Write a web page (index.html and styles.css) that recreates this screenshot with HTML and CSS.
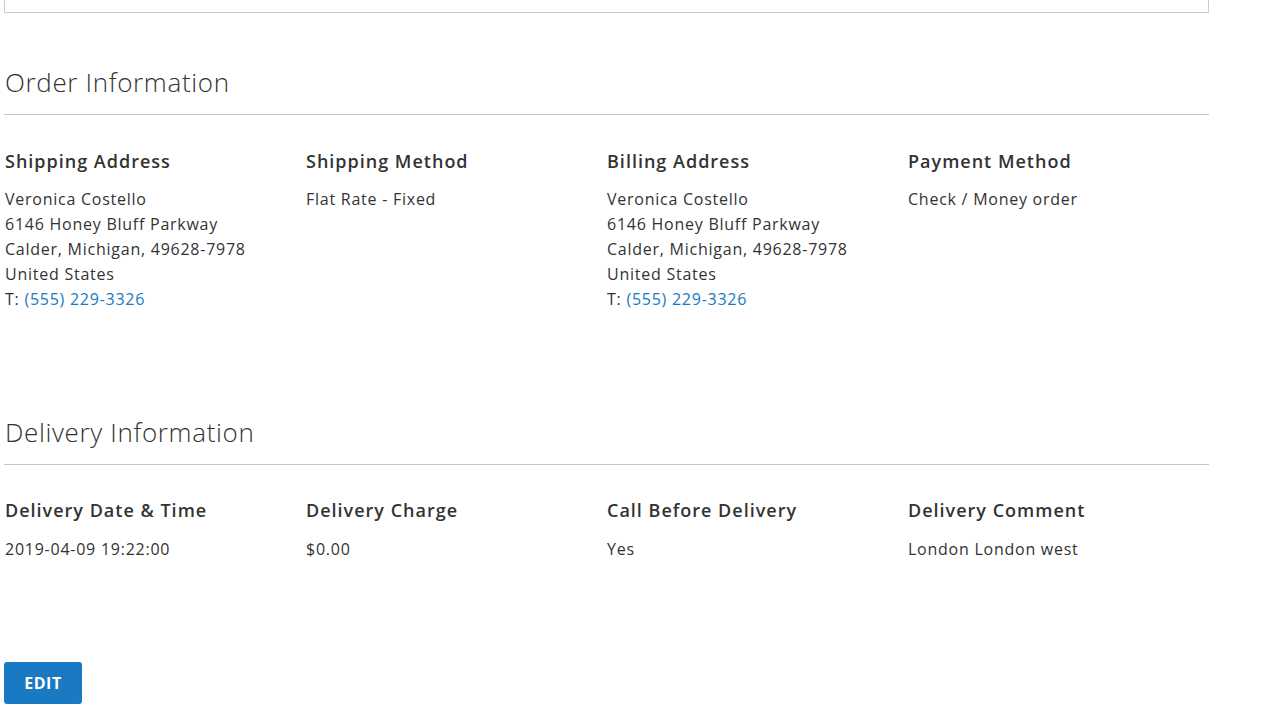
FILE: index.html
```html
<!DOCTYPE html>
<html lang="en">
<head>
    <meta charset="UTF-8">
    <meta name="viewport" content="width=device-width, initial-scale=1.0">
    <title>Order View</title>
    <link rel="stylesheet" href="styles.css">
</head>
<body>
    <main class="page">
        <div class="top-box"></div>

        <section class="block block-order">
            <h2 class="block-title">Order Information</h2>
            <div class="block-content">
                <div class="box">
                    <h3 class="box-title">Shipping Address</h3>
                    <address class="box-content">
                        Veronica Costello<br>
                        6146 Honey Bluff Parkway<br>
                        Calder, Michigan, 49628-7978<br>
                        United States<br>
                        T: <a href="#">(555) 229-3326</a>
                    </address>
                </div>
                <div class="box">
                    <h3 class="box-title">Shipping Method</h3>
                    <div class="box-content">Flat Rate - Fixed</div>
                </div>
                <div class="box">
                    <h3 class="box-title">Billing Address</h3>
                    <address class="box-content">
                        Veronica Costello<br>
                        6146 Honey Bluff Parkway<br>
                        Calder, Michigan, 49628-7978<br>
                        United States<br>
                        T: <a href="#">(555) 229-3326</a>
                    </address>
                </div>
                <div class="box">
                    <h3 class="box-title">Payment Method</h3>
                    <div class="box-content">Check / Money order</div>
                </div>
            </div>
        </section>

        <section class="block block-delivery">
            <h2 class="block-title">Delivery Information</h2>
            <div class="block-content">
                <div class="box">
                    <h3 class="box-title">Delivery Date &amp; Time</h3>
                    <div class="box-content">2019-04-09 19:22:00</div>
                </div>
                <div class="box">
                    <h3 class="box-title">Delivery Charge</h3>
                    <div class="box-content">$0.00</div>
                </div>
                <div class="box">
                    <h3 class="box-title">Call Before Delivery</h3>
                    <div class="box-content">Yes</div>
                </div>
                <div class="box">
                    <h3 class="box-title">Delivery Comment</h3>
                    <div class="box-content">London London west</div>
                </div>
            </div>
        </section>

        <button class="btn-edit" type="button">EDIT</button>
    </main>
</body>
</html>
```

FILE: styles.css
```css
body {
    font-family: 'Open Sans', 'Liberation Sans', sans-serif;
    margin: 0;
    padding: 0;
    background-color: #fff;
    color: #333;
}

.page {
    margin-left: 4px;
    width: 1205px;
}

.top-box {
    height: 12px;
    border: 1px solid #ccc;
    border-top: none;
}

.block-title {
    margin: 52px 0 0;
    padding: 0 0 14px 1px;
    border-bottom: 1px solid #c6c6c6;
    font-size: 26px;
    font-weight: 300;
    line-height: 35px;
    letter-spacing: 0.65px;
}

.block-order {
    padding-bottom: 51px;
}

.block-content {
    display: grid;
    grid-template-columns: repeat(4, 1fr);
    margin-top: 34px;
    padding-left: 1px;
}

.block-delivery .block-content {
    margin-top: 33px;
}

.box-title {
    margin: 0 0 14px;
    font-size: 18px;
    font-weight: 600;
    line-height: 24px;
    letter-spacing: 1px;
}

.block-delivery .box-title {
    margin-bottom: 15px;
}

.box-content {
    font-style: normal;
    font-size: 16px;
    line-height: 25px;
    letter-spacing: 0.75px;
}

.box-content a {
    color: #1979c3;
    text-decoration: none;
}

.btn-edit {
    margin-top: 100px;
    height: 42px;
    width: 78px;
    padding: 0;
    background-color: #1979c3;
    color: #fff;
    border: none;
    border-radius: 3px;
    font-family: 'Open Sans', 'Liberation Sans', sans-serif;
    font-size: 16px;
    font-weight: 700;
    letter-spacing: 0.5px;
    cursor: pointer;
}
```
